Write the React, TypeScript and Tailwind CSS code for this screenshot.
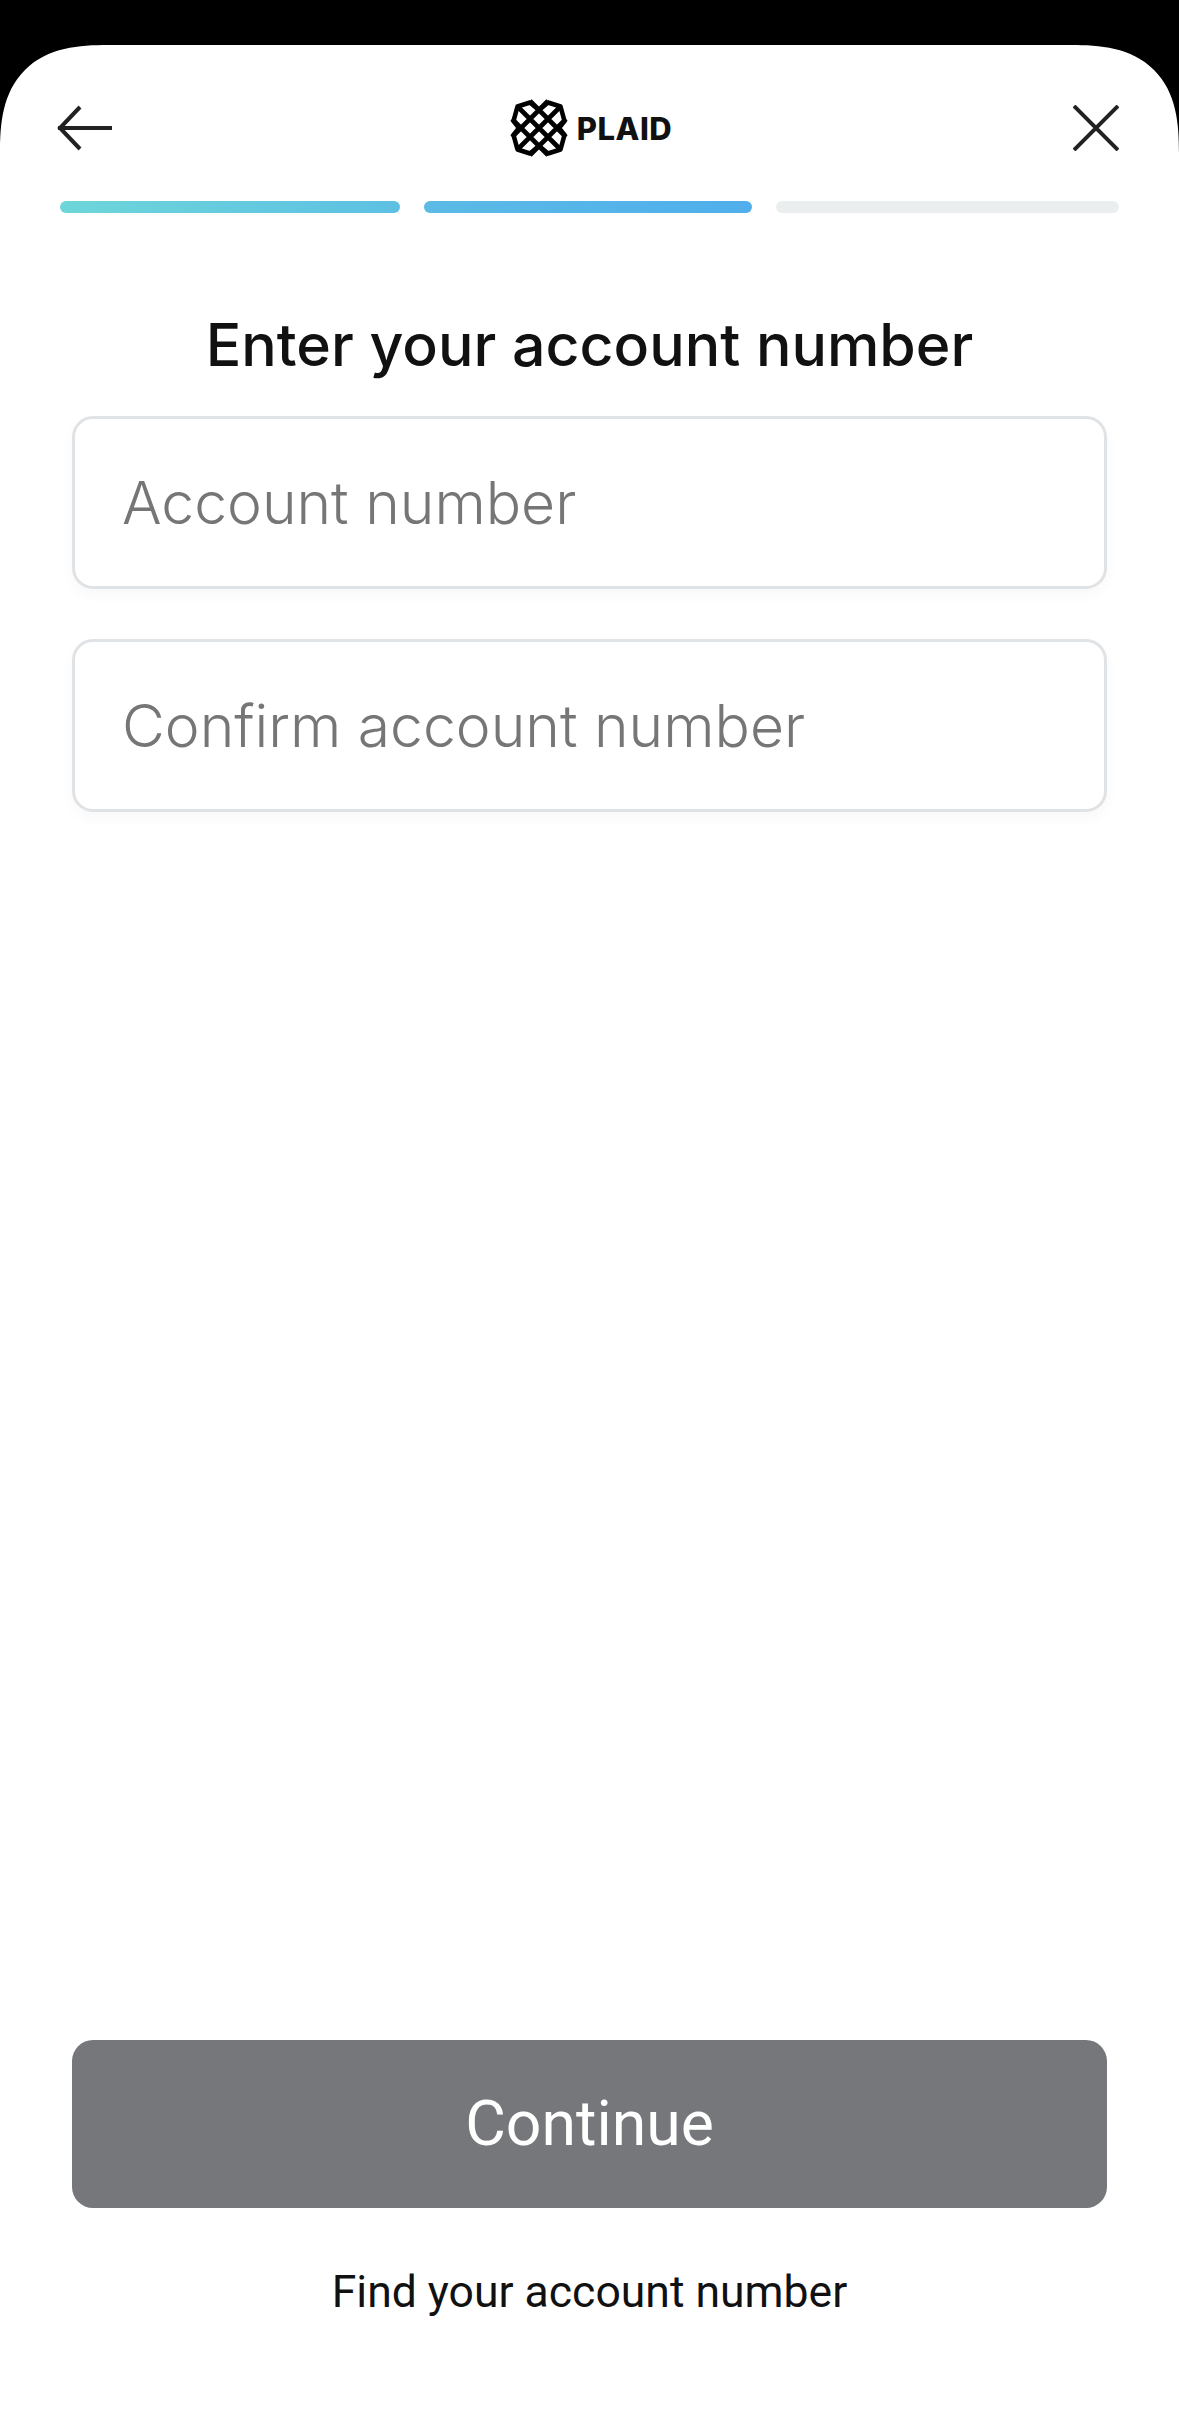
const sans = "font-['Inter',sans-serif]";

function BackArrow() {
  return (
    <svg width="56" height="46" viewBox="0 0 56 46" fill="none" stroke="#222" strokeWidth="4">
      <path d="M1 23H55" />
      <path d="M23 2L3 23L23 44" />
    </svg>
  );
}

function CloseIcon() {
  return (
    <svg width="46" height="46" viewBox="0 0 46 46" fill="none" stroke="#222" strokeWidth="4">
      <path d="M1 1L45 45M45 1L1 45" />
    </svg>
  );
}

// Plaid mark: notched outline crossed by three diagonals each way
function PlaidMark() {
  return (
    <svg width="60" height="60" viewBox="0 0 60 60" fill="none" stroke="#000" strokeWidth="4.6" strokeLinejoin="round">
      <path d="M8.5 8.5L21 4.5L30 12L39 4.5L51.5 8.5L55.5 23L50 30L55.5 37L51.5 51.5L39 55.5L30 48L21 55.5L8.5 51.5L4.5 37L10 30L4.5 23Z" />
      <path d="M21 3L57 39M39 3L3 39M3 21L39 57M57 21L21 57M8 8L52 52M52 8L8 52" />
    </svg>
  );
}

function Field({ placeholder }: { placeholder: string }) {
  return (
    <div className="flex h-[173px] items-center rounded-[21px] border-[3px] border-[#e0e3e5] bg-white pl-[47px] shadow-[0_6px_14px_rgba(0,0,0,0.03)]">
      <span className={`${sans} pt-[2px] text-[58.8px] font-light leading-none text-[#767676]`}>{placeholder}</span>
    </div>
  );
}

export default function App() {
  return (
    <div className="flex h-[2424px] w-[1179px] flex-col bg-black pt-[45px]">
      <div className="flex flex-1 flex-col rounded-t-[108px] bg-white [corner-shape:superellipse(1.4)]">
        <header className="flex h-[124px] items-center justify-between pl-[57px] pr-[60px] pt-[42px]">
          <BackArrow />
          <div className="mr-[5px] flex items-center gap-[8px]">
            <PlaidMark />
            <span className={`${sans} text-[31px] font-extrabold leading-none tracking-[0.5px] text-[#111]`}>PLAID</span>
          </div>
          <CloseIcon />
        </header>

        <div className="mt-[32px] flex gap-[24px] pl-[60px] pr-[60px]">
          <div className="h-[12px] w-[340px] rounded-full bg-gradient-to-r from-[#6dd6d9] to-[#5dc0e3]" />
          <div className="h-[12px] w-[328px] rounded-full bg-gradient-to-r from-[#5bbbe5] to-[#50aeec]" />
          <div className="h-[12px] flex-1 rounded-full bg-[#ebeeef]" />
        </div>

        <main className="flex flex-1 flex-col px-[72px]">
          <h1 className={`${sans} mt-[98px] mb-[1px] text-center text-[59px] font-[550] leading-[68px] text-[#111]`}>
            Enter your account number
          </h1>
          <div className="mt-[36px] flex flex-col gap-[50px]">
            <Field placeholder="Account number" />
            <Field placeholder="Confirm account number" />
          </div>
          <button className="mt-auto flex h-[168px] items-center justify-center rounded-[21px] bg-[#76777a]">
            <span className="font-['Roboto',sans-serif] text-[62.5px] font-[450] leading-none text-white">Continue</span>
          </button>
          <a className="mb-[107px] mt-[59px] text-center font-['Roboto',sans-serif] text-[44.5px] font-[450] leading-[50px] text-[#111]">
            Find your account number
          </a>
        </main>
      </div>
    </div>
  );
}
